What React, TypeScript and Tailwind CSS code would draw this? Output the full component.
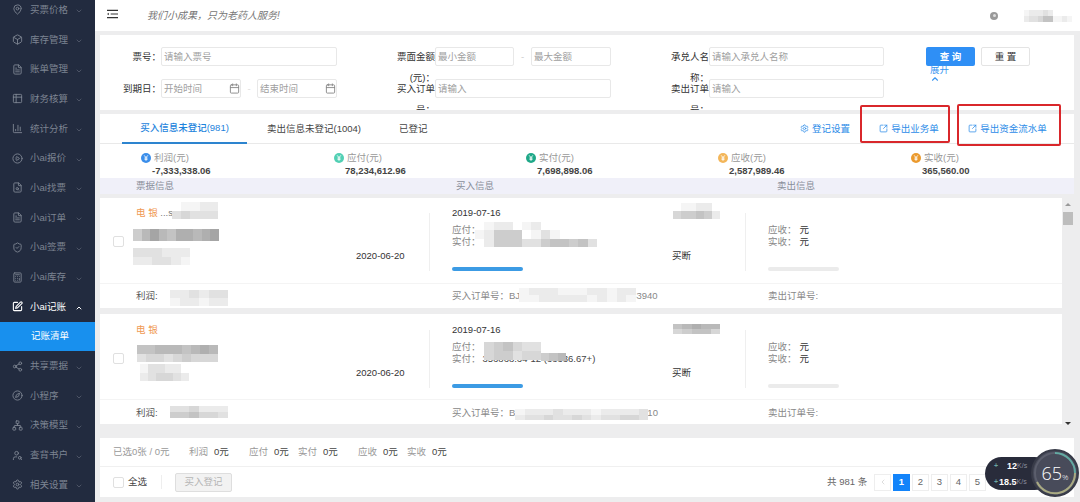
import React from "react";
import {
  BarChart3, Box, Calculator, Calendar, ChevronDown, ChevronLeft, ChevronUp, CirclePlay,
  Compass, FileSearch, FileText, MapPin, Network, Settings, Share2, ShieldCheck, SquareArrowOutUpRight,
  SquarePen, Table2, UserSearch,
} from "lucide-react";

type IconType = React.ComponentType<{ className?: string; strokeWidth?: number }>;

const menu: { icon: IconType; label: string; open?: boolean }[] = [
  { icon: MapPin, label: "买票价格" },
  { icon: Box, label: "库存管理" },
  { icon: FileText, label: "账单管理" },
  { icon: Table2, label: "财务核算" },
  { icon: BarChart3, label: "统计分析" },
  { icon: CirclePlay, label: "小ai报价" },
  { icon: FileSearch, label: "小ai找票" },
  { icon: FileText, label: "小ai订单" },
  { icon: ShieldCheck, label: "小ai签票" },
  { icon: Calculator, label: "小ai库存" },
  { icon: SquarePen, label: "小ai记账", open: true },
  { icon: Share2, label: "共享票据" },
  { icon: Compass, label: "小程序" },
  { icon: Network, label: "决策模型" },
  { icon: UserSearch, label: "查背书户" },
  { icon: Settings, label: "相关设置" },
];

function Sidebar() {
  return (
    <aside className="flex w-[95px] shrink-0 flex-col overflow-hidden bg-[#222b3f]">
      <div className="-mt-[5px] flex flex-col">
        {menu.map(({ icon: Icon, label, open }) => (
          <React.Fragment key={label}>
            <div className={`flex h-[29.7px] shrink-0 items-center pl-3 ${open ? "text-white" : "text-[#7d8492]"}`}>
              <Icon className="size-[11px]" strokeWidth={open ? 2.4 : 2} />
              <span className="ml-[7px] w-[45px] whitespace-nowrap">{label}</span>
              {open ? <ChevronUp className="mt-[3px] size-[8px]" strokeWidth={3} /> : <ChevronDown className="mt-[3px] size-[8px] opacity-70" />}
            </div>
            {open && <div className="flex h-[29.7px] shrink-0 items-center bg-[#1890ee] pl-[31px] text-white">记账清单</div>}
          </React.Fragment>
        ))}
      </div>
    </aside>
  );
}

function Mosaic({ rows, className }: { rows: string[]; className: string }) {
  return (
    <div className={`absolute flex flex-col ${className}`}>
      {rows.map((row, y) => (
        <div key={y} className="flex flex-1">
          {row.split("").map((c, x) => {
            const v = 255 - parseInt(c, 16) * 10;
            return <span key={x} className="flex-1" style={{ background: c === "0" ? "transparent" : `rgb(${v},${v},${v})` }} />;
          })}
        </div>
      ))}
    </div>
  );
}

function Field({ label, text, className }: { label?: string; text: string; className: string }) {
  return (
    <div className={`flex h-[19px] items-center justify-between rounded-[2px] border border-[#e8e8e8] bg-white pl-[2px] text-[#a0a0a0] ${className}`}>
      <span>{text}</span>
      {label === "date" && <Calendar className="size-[11px] text-[#888]" />}
    </div>
  );
}

function Label({ first, rest, className }: { first: string; rest?: string; className: string }) {
  return (
    <div className={`flex h-[19px] shrink-0 flex-col items-end ${className}`}>
      <span className="h-[19px] shrink-0 leading-[19px]">{first}</span>
      {rest && <span className="h-[19px] shrink-0 leading-[23px]">{rest}</span>}
    </div>
  );
}

function Filters() {
  return (
    <section className="mt-1 ml-[5px] h-[75px] w-[974px] shrink-0 overflow-hidden bg-white pt-[12px] text-[#333]">
      <div className="flex h-[32px]">
        <Label first="票号：" className="w-[61px]" />
        <Field text="请输入票号" className="w-[176px]" />
        <Label first="票面金额" rest="(元)：" className="w-[98px]" />
        <Field text="最小金额" className="w-[79px]" />
        <span className="w-[17px] text-center leading-[19px] text-[#ccc]">-</span>
        <Field text="最大金额" className="w-[80px]" />
        <Label first="承兑人名" rest="称：" className="w-[98px]" />
        <Field text="请输入承兑人名称" className="w-[175px]" />
        <div className="ml-[42px]">
          <button className="block h-[19px] w-[49px] rounded-[2px] bg-[#2f8ff5] text-center font-bold text-white">查 询</button>
          <a className="-mt-px ml-[4px] flex w-5 flex-col leading-[10px] text-[#3a96f0]">
            展开<ChevronUp className="-mt-px size-[10px]" strokeWidth={2.6} />
          </a>
        </div>
        <button className="ml-[6px] h-[19px] w-[49px] rounded-[2px] border border-[#e4e4e4] text-center">重 置</button>
      </div>
      <div className="flex h-[32px]">
        <Label first="到期日：" className="w-[61px]" />
        <Field label="date" text="开始时间" className="w-[80px]" />
        <span className="w-[16px] text-center leading-[19px] text-[#ddd]">-</span>
        <Field label="date" text="结束时间" className="w-[80px]" />
        <Label first="买入订单" rest="号：" className="w-[98px]" />
        <Field text="请输入" className="w-[176px]" />
        <Label first="卖出订单" rest="号：" className="w-[98px]" />
        <Field text="请输入" className="w-[175px]" />
      </div>
    </section>
  );
}

const stats = [
  { name: "利润(元)", value: "-7,333,338.06", color: "text-[#3b8eea]", width: "w-[193px]" },
  { name: "应付(元)", value: "78,234,612.96", color: "text-[#52d0b4]", width: "w-[192px]" },
  { name: "实付(元)", value: "7,698,898.06", color: "text-[#1fa888]", width: "w-[192px]" },
  { name: "应收(元)", value: "2,587,989.46", color: "text-[#f3b65a]", width: "w-[193px]" },
  { name: "实收(元)", value: "365,560.00", color: "text-[#eb9a2e]", width: "w-[100px]" },
];

function Coin({ className }: { className: string }) {
  return (
    <svg viewBox="0 0 10 10" className={`size-[10px] ${className}`}>
      <circle cx="5" cy="5" r="5" fill="currentColor" />
      <path d="M3.2 2.4 5 4.6l1.8-2.2M5 4.6v3.2M3.5 5h3M3.5 6.3h3" fill="none" stroke="#fff" strokeWidth=".9" />
    </svg>
  );
}

function Overview() {
  return (
    <section className="relative mt-1 ml-[5px] w-[974px] shrink-0 bg-white">
      <div className="flex h-[30px] items-center border-b border-[#e9e9e9] text-[#444]">
        <div className="ml-[22px] flex h-[30px] w-[125px] items-center justify-center border-b-2 border-[#2d84cf] pt-px font-medium text-[#1d83dc]">买入信息未登记(981)</div>
        <span className="ml-[20px] w-[132px]">卖出信息未登记(1004)</span>
        <span>已登记</span>
        <a className="ml-auto flex items-center gap-[3px] text-[#2d8ce8]"><Settings className="size-[9px]" />登记设置</a>
        <div className="mt-[-10px] ml-[10px] flex h-[38px] w-[90px] items-center justify-center gap-[3px] rounded-[2px] border-2 border-[#d9272b] pt-[10px] pl-[8px] text-[#2d8ce8]">
          <SquareArrowOutUpRight className="size-[9px]" />导出业务单
        </div>
        <div className="mt-[-8px] mr-[13px] ml-[7px] flex h-[42px] w-[104px] items-center justify-center gap-[3px] rounded-[2px] border-2 border-[#d9272b] pt-[8px] pr-[3px] text-[#2d8ce8]">
          <SquareArrowOutUpRight className="size-[9px]" />导出资金流水单
        </div>
      </div>
      <div className="flex h-[34px] pt-[7px] pl-[41px]">
        {stats.map((s) => (
          <div key={s.name} className={s.width}>
            <div className="flex h-[13px] items-center gap-[3px] text-[#999]"><Coin className={s.color} />{s.name}</div>
            <div className="pl-[11px] leading-[13px] font-bold text-[#444]">{s.value}</div>
          </div>
        ))}
      </div>
      <div className="flex h-[16px] items-center bg-[#f0f0f9] pl-[36px] text-[#888e9a]">
        <span className="w-[320px]">票据信息</span>
        <span className="w-[321px]">买入信息</span>
        <span>卖出信息</span>
      </div>
    </section>
  );
}

function Card({ second = false }: { second?: boolean }) {
  return (
    <article className="relative h-[110px] w-[962px] shrink-0 bg-white text-[#888]">
      <div className={`flex h-[86px] border-b border-[#f4f4f4] ${second ? "pt-[9px]" : "pt-[8px]"}`}>
        <span className="mt-[30px] ml-[13px] size-[11px] rounded-[2px] border border-[#e0e0e0]" />
        <div className="ml-[12px] w-[220px] leading-[14px] text-[#f09a55]">电 银 {!second && <span className="text-[#777]">...s</span>}</div>
        <time className="mt-[43px] w-[73px] leading-[14px] text-[#333]">2020-06-20</time>
        <div className="mt-[7px] h-[58px] w-[23px] border-l border-[#efefef]" />
        <div className="w-[220px]">
          <div className="leading-[14px] text-[#333]">2019-07-16</div>
          <div className="mt-[4px] leading-[12px]">应付：</div>
          <div className="leading-[12px]">实付：{second && <span className="ml-[2px] text-[#444]">356868.64-12 (33336.67+)</span>}</div>
          <div className="mt-[19px] h-[4px] w-[71px] rounded-full bg-[#3c9be4]" />
        </div>
        <div className="mt-[43px] w-[73px] leading-[14px] text-[#333]">买断</div>
        <div className="mt-[7px] h-[58px] w-[23px] border-l border-[#efefef]" />
        <div className="pt-[18px] leading-[12px]">
          <div>应收：<span className="ml-[3px] text-[#333]">元</span></div>
          <div>实收：<span className="ml-[3px] text-[#333]">元</span></div>
          <div className="mt-[19px] h-[4px] w-[71px] rounded-full bg-[#ebebeb]" />
        </div>
      </div>
      <div className={`flex items-center pl-[36px] ${second ? "h-[26px]" : "h-[24px]"}`}>
        <span className="w-[316px] text-[#555]">利润:</span>
        <span className="w-[316px]">买入订单号：{second ? "B" : "BJ"}<span className={second ? "ml-[132px]" : "ml-[111px]"}>{second ? "10" : "53940"}</span></span>
        <span>卖出订单号:</span>
      </div>
      {second ? (
        <>
          <Mosaic className="top-[31px] left-[37px] h-[17px] w-[81px]" rows={["667776787", "344345444"]} />
          <Mosaic className="top-[50px] left-[40px] h-[17px] w-[49px]" rows={["133220", "234432"]} />
          <Mosaic className="top-[92px] left-[70px] h-[12px] w-[58px]" rows={["334222", "556443"]} />
          <Mosaic className="top-[28px] left-[384px] h-[18px] w-[57px]" rows={["456433", "455344"]} />
          <Mosaic className="top-[39px] left-[441px] h-[8px] w-[25px]" rows={["567"]} />
          <Mosaic className="top-[95px] left-[415px] h-[11px] w-[133px]" rows={["12223222122223", "23343343233443"]} />
          <Mosaic className="top-[10px] left-[573px] h-[10px] w-[47px]" rows={["67877", "45664"]} />
        </>
      ) : (
        <>
          <Mosaic className="top-[4px] left-[72px] h-[17px] w-[46px]" rows={["01122", "34333"]} />
          <Mosaic className="top-[31px] left-[33px] h-[12px] w-[86px]" rows={["5797688789"]} />
          <Mosaic className="top-[50px] left-[33px] h-[17px] w-[57px]" rows={["333222", "223321"]} />
          <Mosaic className="top-[92px] left-[70px] h-[16px] w-[58px]" rows={["223233", "122122"]} />
          <Mosaic className="top-[24px] left-[375px] h-[25px] w-[122px]" rows={["0122012000000", "1255501310000", "0255533566563"]} />
          <Mosaic className="top-[90px] left-[419px] h-[14px] w-[117px]" rows={["122211122122", "112222212121"]} />
          <Mosaic className="top-[5px] left-[573px] h-[16px] w-[47px]" rows={["011220", "455652"]} />
        </>
      )}
    </article>
  );
}

const totals = [
  { name: "利润", width: "w-[60px]" },
  { name: "应付", width: "w-[49px]" },
  { name: "实付", width: "w-[60px]" },
  { name: "应收", width: "w-[49px]" },
  { name: "实收", width: "w-[60px]" },
];

function Footer() {
  return (
    <section className="mt-[12px] ml-[5px] h-[59px] w-[974px] shrink-0 bg-white">
      <div className="flex h-[29px] items-center border-b border-[#f0f0f0] pl-[13px] text-[#999]">
        <span className="w-[76px]">已选0张 / 0元</span>
        {totals.map((t) => (
          <span key={t.name} className={`whitespace-nowrap ${t.width}`}>{t.name}<span className="ml-[6px] text-[#444]">0元</span></span>
        ))}
      </div>
      <div className="flex h-[30px] items-center pl-[13px] text-[#444]">
        <span className="size-[11px] rounded-[2px] border border-[#e0e0e0]" />
        <span className="ml-[4px] w-[33px]">全选</span>
        <span className="h-[14px] w-[14px] border-l border-[#eee]" />
        <button className="h-[19px] w-[57px] rounded-[2px] border border-[#dedede] bg-[#f2f2f2] text-[#b5b5b5]">买入登记</button>
        <span className="ml-[595px] w-[47px] whitespace-nowrap text-[#666]">共 981 条</span>
        <div className="flex gap-[2px] text-[#666]">
          <span className="flex size-[17px] items-center justify-center border border-[#eee] text-[#ccc]"><ChevronLeft className="size-[8px]" /></span>
          <span className="flex size-[17px] items-center justify-center bg-[#1384fa] font-bold text-white">1</span>
          {[2, 3, 4, 5].map((n) => (
            <span key={n} className="flex size-[17px] items-center justify-center border border-[#eee]">{n}</span>
          ))}
        </div>
      </div>
    </section>
  );
}

function SpeedWidget() {
  return (
    <div className="absolute top-[449px] left-[985px] h-[48px] w-[94px] text-white">
      <div className="absolute top-[8px] left-0 flex h-[33px] w-[66px] flex-col justify-center rounded-full bg-[#292c3b] text-[9px] font-bold">
        <div className="flex h-[16px] items-center pl-[9px]"><span className="w-[13px] text-[7px] text-[#6aa5a2]">+</span>12<span className="text-[7px] font-normal text-[#8a8e9e]">K/s</span></div>
        <div className="flex h-[16px] items-center pl-[9px]"><span className="w-[5px] text-[7px] text-[#6aa5a2]">+</span>18.5<span className="text-[7px] font-normal text-[#8a8e9e]">K/s</span></div>
      </div>
      <svg viewBox="0 0 48 48" className="absolute top-0 right-0 size-[48px]">
        <circle cx="24" cy="24" r="23" fill="#484b5a" stroke="#383b48" strokeWidth="2" />
        <circle cx="24" cy="24" r="20" fill="none" stroke="#5b5e6c" strokeWidth="2" />
        <path d="M24 4a20 20 0 0 1 20 20" fill="none" stroke="#62aaa2" strokeWidth="2" />
        <path d="M44 24A20 20 0 0 1 6 33" fill="none" stroke="#a9aa82" strokeWidth="2" />
      </svg>
      <div className="absolute top-0 right-0 flex h-[48px] w-[48px] items-center justify-center font-['Open_Sans'] text-[18px] font-light">65<span className="mt-[7px] text-[8px]">%</span></div>
    </div>
  );
}

export default function App() {
  return (
    <div className="relative flex h-[502px] w-[1080px] overflow-hidden bg-[#ededee] font-['Liberation_Sans','Noto_Sans_CJK_SC',sans-serif] text-[9.5px] leading-[14px] whitespace-nowrap">
      <Sidebar />
      <main className="flex min-w-0 flex-1 flex-col">
        <header className="flex h-[31px] shrink-0 items-center bg-white">
          <svg viewBox="0 0 12 10" className="mt-[-3px] ml-[12px] h-[10px] w-[11px]" stroke="#333" strokeWidth="1.2" fill="#333">
            <path d="M0 1h12M4 5h8M0 9h12" />
            <path d="M0 5 2 3.7v2.6Z" stroke="none" />
          </svg>
          <span className="ml-[29px] w-[137px] text-[10px] text-[#777] italic">我们小成果，只为老药人服务!</span>
          <span className="ml-[706px] flex size-[8px] shrink-0 items-center justify-center rounded-full bg-[#999]"><span className="size-[3px] rounded-full bg-[#ddd]" /></span>
          <div className="relative ml-[26px] h-[12px] w-[48px] shrink-0"><Mosaic className="inset-0" rows={["1222320000", "2334661121"]} /></div>
        </header>
        <Filters />
        <Overview />
        <div className="mt-1 ml-[5px] flex h-[228px] w-[974px] shrink-0 overflow-hidden">
          <div className="flex flex-col gap-[6px]"><Card /><Card second /></div>
          <div className="flex flex-1 flex-col items-center pt-[5px] pb-px">
            <span className="border-x-[3px] border-b-[3px] border-x-transparent border-b-[#999]" />
            <span className="mt-[6px] h-[13px] w-[10px] bg-[#bdbdbd]" />
            <span className="mt-auto border-x-[3px] border-t-[3px] border-x-transparent border-t-[#333]" />
          </div>
        </div>
        <Footer />
      </main>
      <SpeedWidget />
    </div>
  );
}
